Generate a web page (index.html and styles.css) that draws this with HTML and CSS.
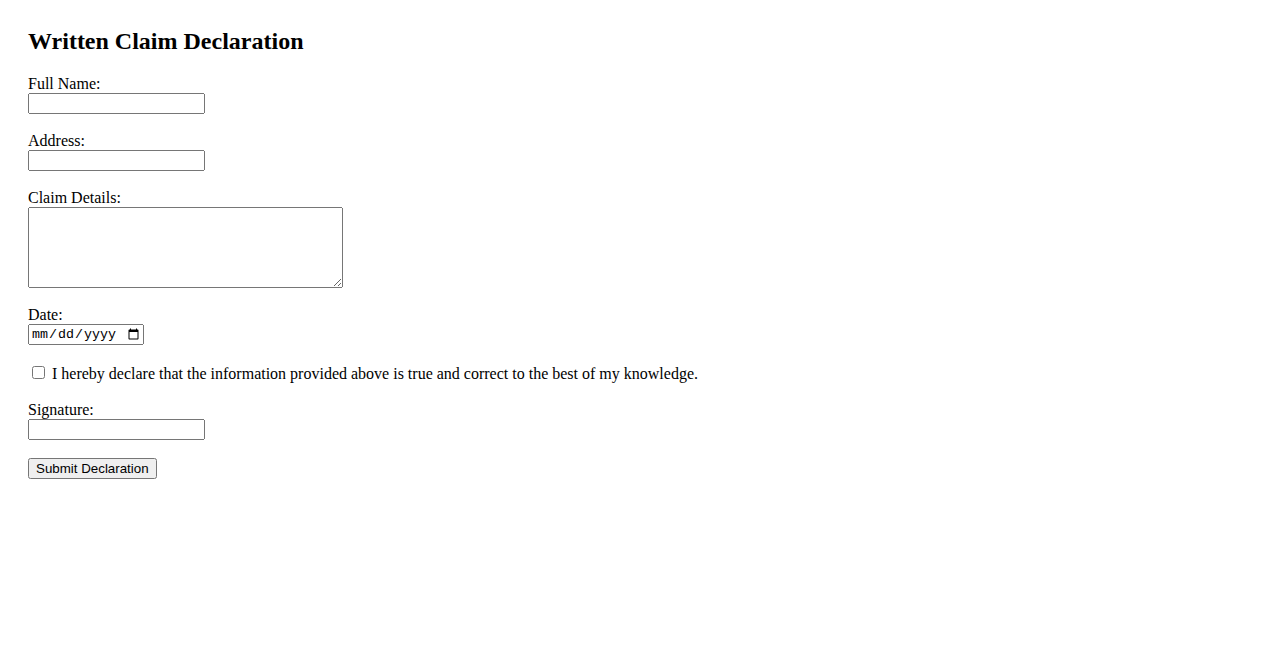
FILE: index.html
```html
<!DOCTYPE html>
<html lang="en">
<head>
    <meta charset="UTF-8">
    <meta name="viewport" content="width=device-width, initial-scale=1.0">
    <title>Written Claim Declaration</title>
    <link rel="stylesheet" href="styles.css">
</head>
<body>
    <div class="page">
        <h2>Written Claim Declaration</h2>

        <form class="claim-form">
            <div class="field">
                <label for="fullName">Full Name:</label>
                <input type="text" id="fullName" name="fullName" class="text-input">
            </div>

            <div class="field">
                <label for="address">Address:</label>
                <input type="text" id="address" name="address" class="text-input">
            </div>

            <div class="field">
                <label for="details">Claim Details:</label>
                <textarea id="details" name="details" rows="5" cols="40" class="details-input"></textarea>
            </div>

            <div class="field">
                <label for="date">Date:</label>
                <input type="date" id="date" name="date" class="date-input">
            </div>

            <div class="field check-row">
                <input type="checkbox" id="agree" name="agree">
                <label for="agree">I hereby declare that the information provided above is true and correct to the best of my knowledge.</label>
            </div>

            <div class="field">
                <label for="signature">Signature:</label>
                <input type="text" id="signature" name="signature" class="text-input">
            </div>

            <button type="submit" class="submit-btn">Submit Declaration</button>
        </form>
    </div>
</body>
</html>
```

FILE: styles.css
```css
body {
    font-family: "Liberation Serif", "Times New Roman", serif;
    font-size: 16px;
    margin: 0;
    padding: 27px 28px 28px 28px;
    color: #000;
    background: #fff;
}
h2 {
    font-size: 24px;
    font-weight: bold;
    line-height: 28px;
    margin: 0 0 20px 0;
}
.field {
    margin-bottom: 18px;
}
.field label {
    display: block;
    line-height: 18px;
}
.text-input {
    display: block;
    box-sizing: border-box;
    width: 177px;
    height: 21px;
    margin: 0;
}
.details-input {
    display: block;
    box-sizing: border-box;
    width: 315px;
    height: 81px;
    margin: 0;
}
.date-input {
    display: block;
    box-sizing: border-box;
    width: 116px;
    height: 21px;
    margin: 0;
    font-family: "Liberation Mono", monospace;
    font-size: 13.33px;
}
.check-row {
    display: flex;
    align-items: flex-start;
    margin-top: 20px;
}
.check-row input {
    width: 13px;
    height: 13px;
    margin: 1px 7px 0 4px;
}
.check-row label {
    display: inline;
}
.submit-btn {
    font-family: "Liberation Sans", Arial, sans-serif;
    font-size: 13.33px;
    height: 21px;
    padding: 1px 6px;
    margin: 0;
}
```
